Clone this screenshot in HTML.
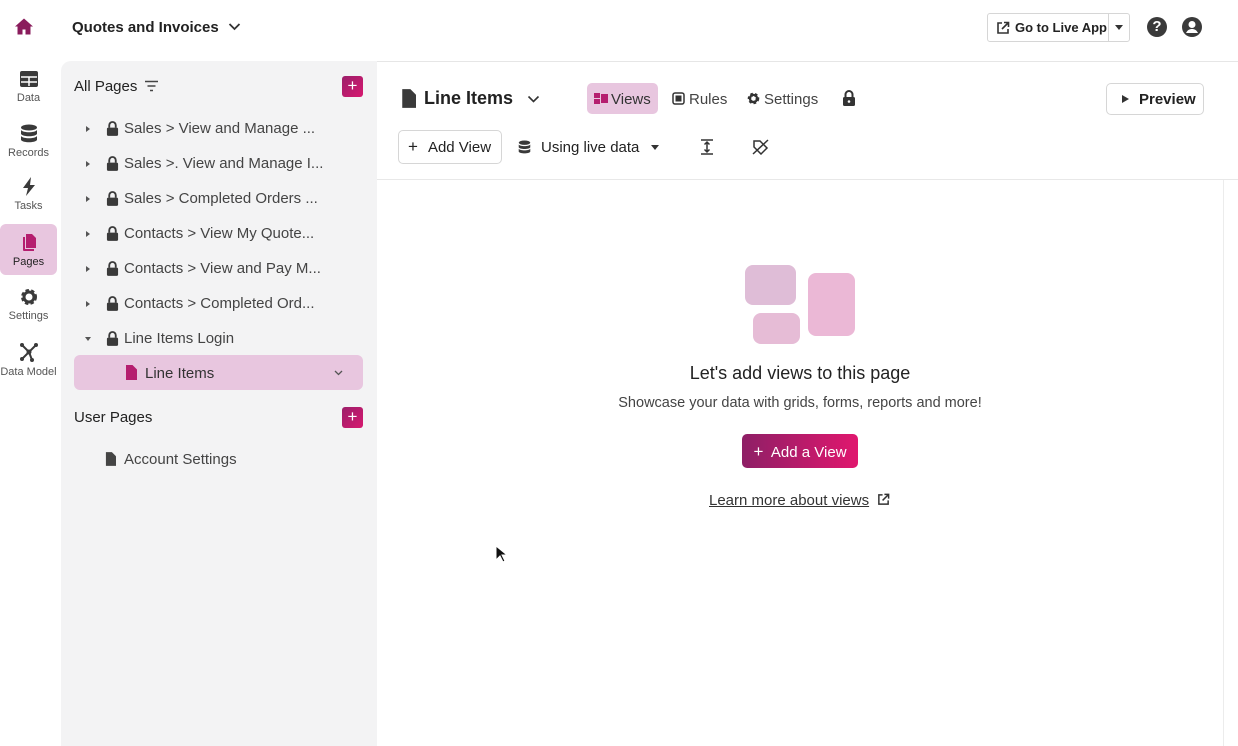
<!DOCTYPE html><html><head><style>
*{box-sizing:border-box;margin:0;padding:0}
body{width:1238px;height:746px;overflow:hidden;font-family:"Liberation Sans",sans-serif;background:#fff;color:#2b2b2b;position:relative}
.a{position:absolute}
.rail{left:0;top:61px;width:60px}
.ri{position:absolute;left:0;width:57px;text-align:center;font-size:11px;color:#555}
.ri svg{display:block;margin:0 auto 4px}
.panel{left:61px;top:61px;width:316px;height:685px;background:#f3f3f4;border-top-left-radius:10px}
.row{position:absolute;left:0;height:35px;font-size:15px;color:#444;display:flex;align-items:center}
.tri{width:0;height:0;border-left:4px solid #555;border-top:3.5px solid transparent;border-bottom:3.5px solid transparent;margin:0 16px 0 25px}
.plus{position:absolute;width:21px;height:21px;border-radius:3px;background:linear-gradient(135deg,#9b1f6a,#d7186f);color:#fff;font-size:17px;line-height:20px;text-align:center}
.btn{position:absolute;border:1px solid #d6d6d6;border-radius:5px;background:#fff;font-size:15px;display:flex;align-items:center;color:#222}
</style></head><body>
<svg class="a" style="left:14px;top:17px" width="20" height="19" viewBox="0 0 20 18"><path d="M10 1L1 9h2.5v8h5v-5h3v5h5V9H19z" fill="#8a1c5c"/></svg>
<div class="a" style="left:72px;top:19px;font-size:15px;font-weight:bold;color:#222">Quotes and Invoices</div>
<svg class="a" style="left:228px;top:22px" width="13" height="9"><path d="M1.5 2l5 5 5-5" stroke="#333" stroke-width="1.8" fill="none"/></svg>
<div class="btn" style="left:987px;top:13px;width:143px;height:29px;border-radius:3px">
<svg style="margin:0 5px 0 8px" width="14" height="14" viewBox="0 0 14 14"><path d="M6 2H2v10h10V8M8 1.5h4.5V6M12.5 1.5L6 8" stroke="#333" stroke-width="1.6" fill="none"/></svg>
<span style="font-size:13px;font-weight:bold">Go to Live App</span>
<span style="position:absolute;left:120px;top:0;height:27px;border-left:1px solid #d6d6d6;width:22px"></span>
<span style="position:absolute;left:127px;top:11px;border-top:5px solid #333;border-left:4.5px solid transparent;border-right:4.5px solid transparent"></span></div>
<div class="a" style="left:1147px;top:17px;width:20px;height:20px;border-radius:50%;background:#3a3a3a;color:#fff;font-weight:bold;font-size:15px;text-align:center;line-height:20px">?</div>
<svg class="a" style="left:1182px;top:17px" width="20" height="20" viewBox="0 0 20 20"><circle cx="10" cy="10" r="10" fill="#3a3a3a"/><circle cx="10" cy="7.5" r="3.5" fill="#fff"/><path d="M4 16c1.5-3 3.5-4 6-4s4.5 1 6 4" fill="#fff"/></svg>
<div class="a" style="left:377px;top:61px;width:861px;border-top:1px solid #e6e6e6"></div>
<div class="a rail">
<div class="ri" style="top:9px"><svg width="20" height="18" viewBox="0 0 20 18"><rect x="1" y="1" width="18" height="16" rx="2" fill="#3a3a3a"/><path d="M2 7h16M2 12h16M10 7v9" stroke="#fff" stroke-width="1.5"/></svg>Data</div>
<div class="ri" style="top:63px"><svg width="18" height="19" viewBox="0 0 18 19"><ellipse cx="9" cy="3.5" rx="8" ry="3" fill="#3a3a3a"/><path d="M1 6c2 3 14 3 16 0v4c-2 3-14 3-16 0zM1 12c2 3 14 3 16 0v4c-2 3-14 3-16 0z" fill="#3a3a3a"/></svg>Records</div>
<div class="ri" style="top:116px"><svg width="14" height="19" viewBox="0 0 14 19"><path d="M9 0L1 11h5l-2 8 9-11H8z" fill="#3a3a3a"/></svg>Tasks</div>
<div style="position:absolute;left:0;top:163px;width:57px;height:51px;background:#e8c6df;border-radius:6px"></div>
<div class="ri" style="top:172px;color:#222"><svg width="16" height="19" viewBox="0 0 16 19"><path d="M2 4h2v12h9v2H3a1 1 0 01-1-1z" fill="#b51e6f"/><path d="M5 1h6l4 4v10H5z" fill="#b51e6f"/></svg>Pages</div>
<div class="ri" style="top:227px"><svg width="18" height="18" viewBox="0 0 18 18"><circle cx="9" cy="9" r="6" fill="none" stroke="#3a3a3a" stroke-width="4" stroke-dasharray="3 2"/><circle cx="9" cy="9" r="5" fill="none" stroke="#3a3a3a" stroke-width="3"/></svg>Settings</div>
<div class="ri" style="top:281px"><svg width="20" height="20" viewBox="0 0 20 20"><path d="M3 3l7 7-7 7M17 3l-7 7 3 8" stroke="#3a3a3a" stroke-width="2" fill="none"/><circle cx="10" cy="10" r="2.5" fill="#3a3a3a"/><circle cx="3" cy="3" r="2" fill="#3a3a3a"/><circle cx="17" cy="3" r="2" fill="#3a3a3a"/><circle cx="3" cy="17" r="2" fill="#3a3a3a"/><circle cx="13" cy="18" r="2" fill="#3a3a3a"/></svg>Data Model</div>
</div>
<div class="a panel">
<div class="a" style="left:13px;top:17px;font-size:15px;color:#222">All Pages</div>
<svg class="a" style="left:83px;top:19px" width="15" height="12"><path d="M1 1.5h13M3.5 6h8M6 10.5h3" stroke="#444" stroke-width="1.5"/></svg>
<div class="plus" style="left:281px;top:15px">+</div>
</div>
<div class="a" style="left:74px;top:355px;width:289px;height:35px;background:#e8c6df;border-radius:6px"></div>
<svg class="a" style="left:125px;top:365px" width="12" height="15" viewBox="0 0 12 15"><path d="M1 0h6.5L12 4.5V15H1z" fill="#b51e6f"/></svg>
<div class="a" style="left:145px;top:365px;font-size:15px;color:#333">Line Items</div>
<svg class="a" style="left:334px;top:370px" width="9" height="6"><path d="M1 1l3.5 3.5L8 1" stroke="#555" stroke-width="1.3" fill="none"/></svg>
<div class="a" style="left:74px;top:409px;font-size:15px;color:#222">User Pages</div>
<div class="plus" style="left:342px;top:407px">+</div>
<svg class="a" style="left:105px;top:452px" width="11" height="14" viewBox="0 0 12 15"><path d="M1 0h6.5L12 4.5V15H1z" fill="#444"/></svg>
<div class="a" style="left:124px;top:451px;font-size:15px;color:#444">Account Settings</div>
<svg class="a" style="left:401px;top:89px" width="15" height="19" viewBox="0 0 12 15"><path d="M1 0h6.5L12 4.5V15H1z" fill="#3a3a3a"/></svg>
<div class="a" style="left:424px;top:88px;font-size:18px;font-weight:bold;color:#222">Line Items</div>
<svg class="a" style="left:527px;top:95px" width="13" height="8"><path d="M1.5 1.5l5 5 5-5" stroke="#333" stroke-width="1.6" fill="none"/></svg>
<div class="a" style="left:587px;top:83px;width:71px;height:31px;background:#e8c6df;border-radius:5px"></div>
<svg class="a" style="left:594px;top:93px" width="14" height="11"><rect x="0" y="0" width="6" height="5" fill="#b51e6f"/><rect x="0" y="6" width="6" height="5" fill="#b51e6f"/><rect x="7" y="1" width="7" height="9" fill="#b51e6f"/></svg>
<div class="a" style="left:611px;top:91px;font-size:15px;color:#333">Views</div>
<svg class="a" style="left:672px;top:92px" width="13" height="13"><rect x="1" y="1" width="11" height="11" rx="2" fill="none" stroke="#333" stroke-width="1.5"/><rect x="3.5" y="3.5" width="6" height="6" fill="#333"/></svg>
<div class="a" style="left:689px;top:91px;font-size:15px;color:#444">Rules</div>
<svg class="a" style="left:747px;top:92px" width="13" height="13" viewBox="0 0 18 18"><circle cx="9" cy="9" r="5.5" fill="none" stroke="#333" stroke-width="5" stroke-dasharray="3 2.5"/><circle cx="9" cy="9" r="5" fill="none" stroke="#333" stroke-width="3"/></svg>
<div class="a" style="left:764px;top:91px;font-size:15px;color:#444">Settings</div>
<svg class="a" style="left:842px;top:90px" width="14" height="16" viewBox="0 0 14 16"><path d="M3.5 7V4.5a3.5 3.5 0 017 0V7" stroke="#333" stroke-width="2" fill="none"/><rect x="1" y="7" width="12" height="9" rx="1.5" fill="#333"/><circle cx="7" cy="11.5" r="1.3" fill="#fff"/></svg>
<div class="btn" style="left:1106px;top:83px;width:98px;height:32px"><span style="margin:0 10px 0 15px;border-left:7px solid #333;border-top:4.5px solid transparent;border-bottom:4.5px solid transparent"></span><b style="font-size:15px">Preview</b></div>
<div class="btn" style="left:398px;top:130px;width:104px;height:34px"><span style="margin:0 10px 0 9px;font-size:17px">+</span>Add View</div>
<svg class="a" style="left:518px;top:140px" width="13" height="14" viewBox="0 0 18 19"><ellipse cx="9" cy="3.5" rx="8" ry="3" fill="#3a3a3a"/><path d="M1 6c2 3 14 3 16 0v4c-2 3-14 3-16 0zM1 12c2 3 14 3 16 0v4c-2 3-14 3-16 0z" fill="#3a3a3a"/></svg>
<div class="a" style="left:541px;top:139px;font-size:15px;color:#222">Using live data</div>
<span class="a" style="left:651px;top:145px;border-top:5px solid #333;border-left:4.5px solid transparent;border-right:4.5px solid transparent"></span>
<svg class="a" style="left:700px;top:139px" width="14" height="16"><path d="M1 1h12M1 15h12M7 3v10M4.5 5.5L7 3l2.5 2.5M4.5 10.5L7 13l2.5-2.5" stroke="#333" stroke-width="1.5" fill="none"/></svg>
<svg class="a" style="left:752px;top:139px" width="17" height="16"><path d="M2 2h6l7 7-6 6-7-7z" stroke="#333" stroke-width="1.5" fill="none"/><path d="M1 15L16 1" stroke="#333" stroke-width="1.5"/></svg>
<div class="a" style="left:377px;top:179px;width:861px;border-top:1px solid #e8e8e8"></div>
<div class="a" style="left:1223px;top:180px;height:566px;border-left:1px solid #ececec"></div>
<div class="a" style="left:745px;top:265px;width:51px;height:40px;border-radius:8px;background:#dfbdd7"></div>
<div class="a" style="left:753px;top:313px;width:47px;height:31px;border-radius:8px;background:#e6bcd6"></div>
<div class="a" style="left:808px;top:273px;width:47px;height:63px;border-radius:8px;background:#ebb8d6"></div>
<div class="a" style="left:600px;top:363px;width:400px;text-align:center;font-size:18px;color:#222">Let's add views to this page</div>
<div class="a" style="left:580px;top:395px;width:440px;text-align:center;font-size:14.5px;color:#444">Showcase your data with grids, forms, reports and more!</div>
<div class="a" style="left:742px;top:434px;width:116px;height:34px;border-radius:5px;background:linear-gradient(90deg,#8e1f66,#e0176e);color:#fff;font-size:15px;text-align:center;line-height:35px"><span style="font-size:17px">+</span>&nbsp; Add a View</div>
<div class="a" style="left:709px;top:492px;font-size:15px;color:#333;text-decoration:underline">Learn more about views</div>
<svg class="a" style="left:877px;top:493px" width="13" height="13" viewBox="0 0 14 14"><path d="M6 2H2v10h10V8M8 1.5h4.5V6M12.5 1.5L6 8" stroke="#333" stroke-width="1.6" fill="none"/></svg>
<svg class="a" style="left:495px;top:545px" width="12" height="18"><path d="M1 1v14l4-4 3 6 2-1-3-6h5z" fill="#111" stroke="#fff" stroke-width="1"/></svg>
<div class="a" style="left:61px;top:111px;width:316px">
<div class="row" style="top:0"><span class="tri"></span><svg width="13" height="15" viewBox="0 0 14 16"><path d="M3.5 7V4.5a3.5 3.5 0 017 0V7" stroke="#3a3a3a" stroke-width="2" fill="none"/><rect x="1" y="7" width="12" height="9" rx="1.5" fill="#3a3a3a"/></svg><span style="margin-left:5px">Sales &gt; View and Manage ...</span></div>
<div class="row" style="top:35px"><span class="tri"></span><svg width="13" height="15" viewBox="0 0 14 16"><path d="M3.5 7V4.5a3.5 3.5 0 017 0V7" stroke="#3a3a3a" stroke-width="2" fill="none"/><rect x="1" y="7" width="12" height="9" rx="1.5" fill="#3a3a3a"/></svg><span style="margin-left:5px">Sales &gt;. View and Manage I...</span></div>
<div class="row" style="top:70px"><span class="tri"></span><svg width="13" height="15" viewBox="0 0 14 16"><path d="M3.5 7V4.5a3.5 3.5 0 017 0V7" stroke="#3a3a3a" stroke-width="2" fill="none"/><rect x="1" y="7" width="12" height="9" rx="1.5" fill="#3a3a3a"/></svg><span style="margin-left:5px">Sales &gt; Completed Orders ...</span></div>
<div class="row" style="top:105px"><span class="tri"></span><svg width="13" height="15" viewBox="0 0 14 16"><path d="M3.5 7V4.5a3.5 3.5 0 017 0V7" stroke="#3a3a3a" stroke-width="2" fill="none"/><rect x="1" y="7" width="12" height="9" rx="1.5" fill="#3a3a3a"/></svg><span style="margin-left:5px">Contacts &gt; View My Quote...</span></div>
<div class="row" style="top:140px"><span class="tri"></span><svg width="13" height="15" viewBox="0 0 14 16"><path d="M3.5 7V4.5a3.5 3.5 0 017 0V7" stroke="#3a3a3a" stroke-width="2" fill="none"/><rect x="1" y="7" width="12" height="9" rx="1.5" fill="#3a3a3a"/></svg><span style="margin-left:5px">Contacts &gt; View and Pay M...</span></div>
<div class="row" style="top:175px"><span class="tri"></span><svg width="13" height="15" viewBox="0 0 14 16"><path d="M3.5 7V4.5a3.5 3.5 0 017 0V7" stroke="#3a3a3a" stroke-width="2" fill="none"/><rect x="1" y="7" width="12" height="9" rx="1.5" fill="#3a3a3a"/></svg><span style="margin-left:5px">Contacts &gt; Completed Ord...</span></div>
<div class="row" style="top:210px"><span style="margin:0 15px 0 24px;border-top:4px solid #555;border-left:3.5px solid transparent;border-right:3.5px solid transparent"></span><svg width="13" height="15" viewBox="0 0 14 16"><path d="M3.5 7V4.5a3.5 3.5 0 017 0V7" stroke="#3a3a3a" stroke-width="2" fill="none"/><rect x="1" y="7" width="12" height="9" rx="1.5" fill="#3a3a3a"/></svg><span style="margin-left:5px">Line Items Login</span></div>
</div>
</body></html>
